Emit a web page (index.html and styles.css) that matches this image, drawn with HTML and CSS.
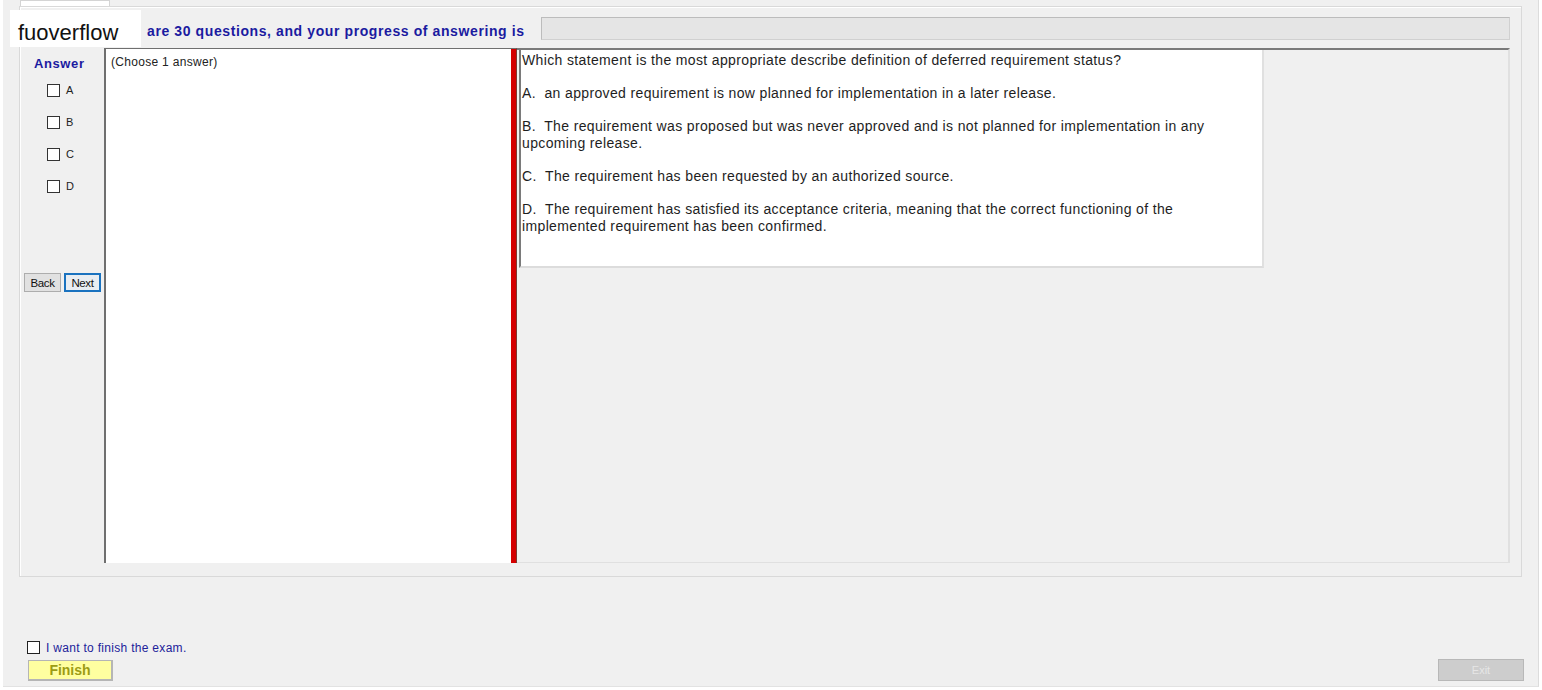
FILE: index.html
```html
<!DOCTYPE html>
<html>
<head>
	<title>Exam</title>
	<link rel="stylesheet" href="styles.css">
</head>
<body>
	<div class="app">
		<div class="tabs"><div class="tab"></div></div>
		<div class="group">
			<div class="head">
				<div class="title">are 30 questions, and your progress of answering is</div>
				<div class="progress"></div>
			</div>
			<div class="main">
				<div class="answers">
					<div class="answer-label">Answer</div>
					<div class="opts">
						<div class="opt"><span class="box"></span>A</div>
						<div class="opt"><span class="box"></span>B</div>
						<div class="opt"><span class="box"></span>C</div>
						<div class="opt"><span class="box"></span>D</div>
					</div>
					<div class="nav">
						<button class="btn">Back</button>
						<button class="btn next">Next</button>
					</div>
				</div>
				<div class="choices">(Choose 1 answer)</div>
				<div class="divider"></div>
				<div class="qpanel">
					<div class="qtext">
						<p>Which statement is the most appropriate describe definition of deferred requirement status?</p>
						<p>A.&nbsp; an approved requirement is now planned for implementation in a later release.</p>
						<p>B.&nbsp; The requirement was proposed but was never approved and is not planned for implementation in any upcoming release.</p>
						<p>C.&nbsp; The requirement has been requested by an authorized source.</p>
						<p>D.&nbsp; The requirement has satisfied its acceptance criteria, meaning that the correct functioning of the implemented requirement has been confirmed.</p>
					</div>
				</div>
			</div>
		</div>
		<div class="footer">
			<div class="finish-col">
				<div class="confirm"><span class="box"></span>I want to finish the exam.</div>
				<button class="finish">Finish</button>
			</div>
			<button class="exit">Exit</button>
		</div>
		<div class="mark">fuoverflow</div>
	</div>
</body>
</html>
```

FILE: styles.css
```css
body {
	margin: 0;
	background: #fff;
	font-family: "Liberation Sans", Arial, sans-serif;
	color: #1e1e1e;
}
.app {
	position: relative;
	margin-left: 3px;
	width: 1536px;
	height: 687px;
	box-sizing: border-box;
	background: #f0f0f0;
	border-right: 1px solid #dcdcdc;
	border-bottom: 1px solid #e2e2e2;
	display: flex;
	flex-direction: column;
}
.tabs {
	height: 6px;
	padding-left: 17px;
}
.tab {
	width: 90px;
	height: 6px;
	box-sizing: border-box;
	background: #fff;
	border: 1px solid #d4d4d4;
	border-bottom: none;
}
.group {
	margin-left: 16px;
	width: 1503px;
	height: 571px;
	box-sizing: border-box;
	border: 1px solid #d9d9d9;
	box-shadow: inset 1px 1px 0 #fff;
	display: flex;
	flex-direction: column;
}
.head {
	height: 41px;
	display: flex;
	align-items: flex-start;
}
.title {
	margin-top: 16px;
	margin-left: 127px;
	font-size: 14px;
	line-height: 16px;
	font-weight: bold;
	letter-spacing: 0.6px;
	color: #1b1ba0;
}
.progress {
	margin-left: auto;
	margin-right: 11px;
	margin-top: 10px;
	width: 969px;
	height: 23px;
	box-sizing: border-box;
	background: #e5e5e5;
	border: 1px solid #bcbcbc;
	border-right-color: #d0d0d0;
	border-bottom-color: #d0d0d0;
}
.main {
	height: 515px;
	margin: 0 11px 0 4px;
	display: flex;
}
.answers {
	width: 80px;
	flex: none;
	padding-top: 8px;
	box-sizing: border-box;
}
.answer-label {
	padding-left: 10px;
	font-size: 13px;
	line-height: 15px;
	font-weight: bold;
	letter-spacing: 0.6px;
	color: #1b1ba0;
}
.opts {
	margin-top: 3px;
}
.opt {
	height: 32px;
	display: flex;
	align-items: center;
	padding-left: 23px;
	font-size: 11px;
	color: #222;
}
.box {
	display: inline-block;
	width: 13px;
	height: 13px;
	box-sizing: border-box;
	border: 1px solid #333;
	background: #fff;
	margin-right: 6px;
}
.nav {
	margin-top: 71px;
	display: flex;
	gap: 3px;
}
.btn {
	width: 37px;
	height: 19px;
	padding: 0;
	font-family: "Liberation Sans", Arial, sans-serif;
	font-size: 11.5px;
	letter-spacing: -0.4px;
	color: #111;
	background: #e1e1e1;
	border: 1px solid #adadad;
}
.next {
	border: 2px solid #1a72bf;
	background: #e8edf2;
}
.choices {
	width: 407px;
	flex: none;
	box-sizing: border-box;
	background: #fff;
	border-left: 2px solid #6f6f6f;
	border-top: 1px solid #6f6f6f;
	padding: 6px 0 0 5px;
	font-size: 12px;
	letter-spacing: 0.3px;
	color: #222;
}
.divider {
	width: 6px;
	flex: none;
	box-sizing: border-box;
	background: #d40000;
	border-right: 1px solid #7b3a30;
	border-top: 1px solid #6f6f6f;
}
.qpanel {
	flex: 1;
	box-sizing: border-box;
	border-top: 2px solid #7a7a7a;
	border-right: 2px solid #e0e0e0;
	border-bottom: 1px solid #e0e0e0;
	padding-left: 2px;
}
.qtext {
	width: 745px;
	height: 218px;
	box-sizing: border-box;
	background: #fff;
	border-left: 2px solid #7a7a7a;
	border-right: 2px solid #e0e0e0;
	border-bottom: 2px solid #dcdcdc;
	padding: 2px 22px 0 1px;
	font-size: 14px;
	line-height: 17px;
	letter-spacing: 0.36px;
	color: #1e1e1e;
}
.qtext p {
	margin: 0 0 16px 0;
}
.footer {
	margin-top: auto;
	padding: 0 14px 5px 24px;
	display: flex;
	justify-content: space-between;
	align-items: flex-end;
}
.confirm {
	display: flex;
	align-items: center;
	font-size: 12px;
	letter-spacing: 0.3px;
	color: #22229a;
	height: 15px;
}
.confirm .box {
	margin-right: 6px;
	border-color: #222;
}
.finish {
	margin-top: 5px;
	margin-left: 1px;
	width: 85px;
	height: 21px;
	padding: 0;
	background: #ffffa0;
	border: 1px solid #b5b5b5;
	border-bottom-width: 2px;
	border-right-width: 2px;
	font-family: "Liberation Sans", Arial, sans-serif;
	font-size: 14px;
	font-weight: bold;
	color: #9c9c14;
}
.exit {
	width: 86px;
	height: 22px;
	padding: 0;
	background: #cdcdcd;
	border: 1px solid #b8b8b8;
	font-family: "Liberation Sans", Arial, sans-serif;
	font-size: 11px;
	color: #e6e6e6;
}
.mark {
	position: absolute;
	left: 7px;
	top: 10px;
	width: 131px;
	height: 37px;
	box-sizing: border-box;
	background: #fff;
	padding: 11px 0 0 8px;
	font-size: 22px;
	line-height: 24px;
	color: #111;
}
```
